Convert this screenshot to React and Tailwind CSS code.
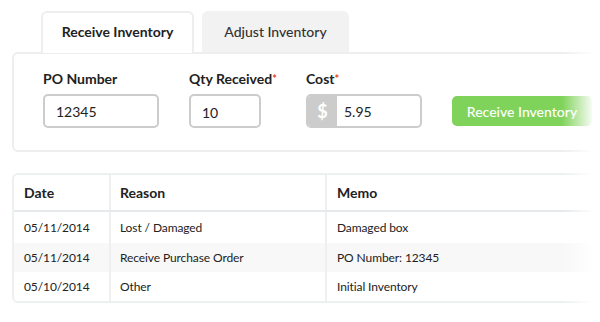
import React from "react";

const rows = [
  { date: "05/11/2014", reason: "Lost / Damaged", memo: "Damaged box" },
  { date: "05/11/2014", reason: "Receive Purchase Order", memo: "PO Number: 12345" },
  { date: "05/10/2014", reason: "Other", memo: "Initial Inventory" },
];

const App = () => {
  return (
    <div
      className="relative w-[600px] h-[322px] overflow-hidden bg-white text-[#222]"
      style={{ fontFamily: "Lato, 'Open Sans', sans-serif" }}
    >
      <div className="w-[640px] pl-[12px] pt-[11px]">
        {/* tabs */}
        <div className="flex gap-[8px] pl-[29px] relative z-10">
          <div className="w-[153px] h-[42px] flex items-center justify-center pb-[3px] bg-white border-2 border-b-0 border-[#eeeeee] rounded-t-[6px] text-[14px] font-bold -mb-[2px]">
            Receive Inventory
          </div>
          <div className="w-[147px] h-[41px] flex items-center justify-center pb-[1px] bg-[#f2f2f2] rounded-t-[6px] text-[14px] font-medium text-[#333]">
            Adjust Inventory
          </div>
        </div>

        {/* form panel */}
        <div className="h-[100px] border-2 border-[#eeeeee] rounded-[6px] pt-[15px] pl-[29px] flex">
          <div className="w-[146px] flex flex-col">
            <label className="text-[14px] font-bold leading-[20px]">PO Number</label>
            <div className="mt-[5px] w-[116px] h-[34px] border-2 border-[#cccccc] rounded-[5px] flex items-center pl-[11px] text-[14px]">
              12345
            </div>
          </div>
          <div className="w-[117px] flex flex-col">
            <label className="text-[14px] font-bold leading-[20px]">
              Qty Received<span className="text-[#e8432e] text-[11px] align-top">*</span>
            </label>
            <div className="mt-[5px] w-[72px] h-[34px] border-2 border-[#cccccc] rounded-[5px] flex items-center pl-[11px] text-[14px] pt-[2px]">
              10
            </div>
          </div>
          <div className="w-[146px] flex flex-col">
            <label className="text-[14px] font-bold leading-[20px]">
              Cost<span className="text-[#e8432e] text-[11px] align-top">*</span>
            </label>
            <div className="mt-[5px] w-[116px] h-[34px] border-2 border-[#cccccc] rounded-[5px] flex overflow-hidden text-[14px]">
              <div className="w-[29px] bg-[#cccccc] flex items-center justify-center text-white text-[18px] font-bold">
                $
              </div>
              <div className="flex items-center pl-[7px]">5.95</div>
            </div>
          </div>
          <div className="pt-[27px]">
            <button
              type="button"
              className="w-[140px] h-[30px] bg-[#80d35a] rounded-[5px] text-white text-[14px] font-medium"
            >
              Receive Inventory
            </button>
          </div>
        </div>

        {/* history table */}
        <div className="mt-[21px] border-2 border-[#edf0f1] rounded-[6px] overflow-hidden">
          <div className="flex h-[37px] border-b-2 border-[#e6eaec] text-[14px] font-bold">
            <div className="w-[97px] border-r-2 border-[#edf0f1] flex items-center pl-[10px]">Date</div>
            <div className="w-[216px] border-r-2 border-[#edf0f1] flex items-center pl-[9px]">Reason</div>
            <div className="flex-1 flex items-center pl-[10px]">Memo</div>
          </div>
          {rows.map((row, index) => (
            <div
              key={index}
              className={`flex text-[12px] tracking-[-0.1px] ${index === 0 ? "h-[31px]" : "h-[29px]"} ${index === 1 ? "bg-[#f8f8f8]" : "bg-white"}`}
            >
              <div className="w-[97px] border-r-2 border-[#edf0f1] flex items-center pl-[10px]">{row.date}</div>
              <div className="w-[216px] border-r-2 border-[#edf0f1] flex items-center pl-[9px]">{row.reason}</div>
              <div className="flex-1 flex items-center pl-[10px]">{row.memo}</div>
            </div>
          ))}
        </div>
      </div>

      {/* right edge fade */}
      <div className="absolute top-0 right-0 h-full w-[38px] bg-gradient-to-r from-white/0 to-white to-[85%] pointer-events-none" />
    </div>
  );
};

export default App;
